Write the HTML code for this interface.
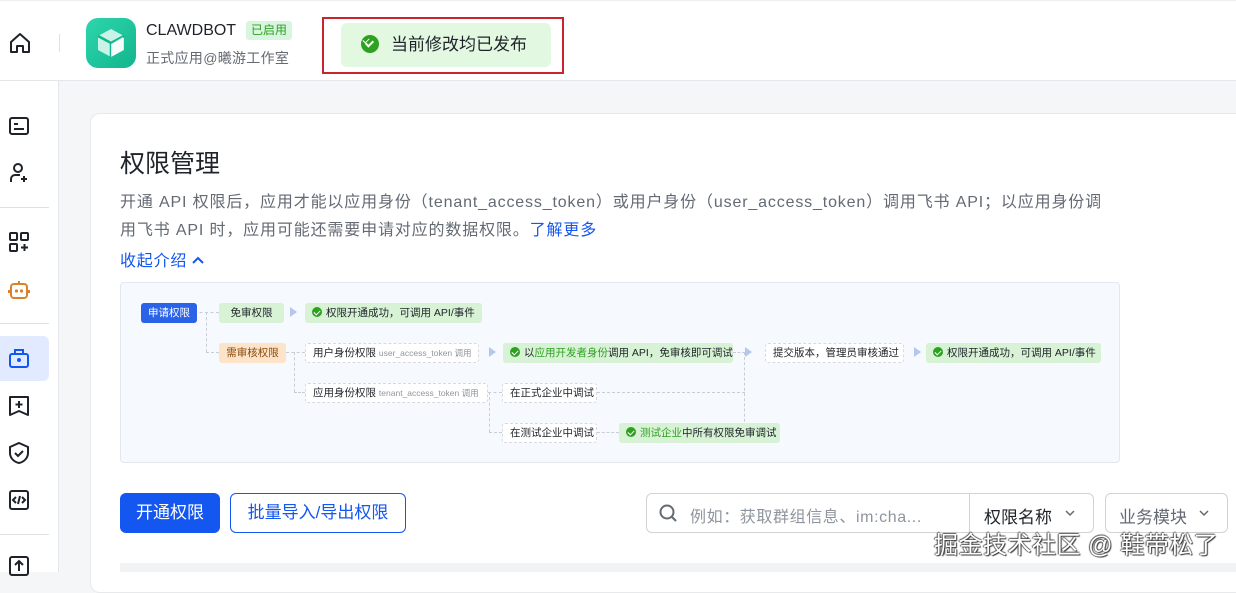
<!DOCTYPE html>
<html><head><meta charset="utf-8"><style>
*{margin:0;padding:0;box-sizing:border-box}
body{width:1236px;height:572px;overflow:hidden;background:#f5f6f7;font-family:"Liberation Sans","Noto Sans CJK SC",sans-serif;position:relative;color:#1f2329}
.a{position:absolute}
.hdr{left:0;top:0;width:1236px;height:81px;background:#fff;border-bottom:1px solid #e4e6ea;border-top:1px solid #eee}
.side{left:0;top:81px;width:59px;height:491px;background:#fff;border-right:1px solid #e4e6ea}
.ic{position:absolute;left:7px;width:24px;height:24px}
.div{position:absolute;left:0;width:49px;height:1px;background:#dee0e3}
.card{left:90px;top:113px;width:1160px;height:480px;background:#fff;border:1px solid #e8e9eb;border-radius:10px}
.dg{left:120px;top:282px;width:1000px;height:181px;background:#f6f9fd;border:1px solid #e3e7ee;border-radius:4px}
.n{position:absolute;height:20px;line-height:20px;font-size:10.5px;border-radius:3px;padding:0 7px;white-space:nowrap;color:#1f2329}
.g{background:#d7f2d5}
.w{background:#fff;border:1px dashed #d5dae2;line-height:18px}
.s{color:#8f959e;font-size:8.5px}
.ck{display:inline-block;width:10px;height:10px;border-radius:50%;background:#2ea121;vertical-align:-1px;margin-right:4px;position:relative}
.ck:after{content:"";position:absolute;left:3px;top:2px;width:3px;height:5px;border:solid #fff;border-width:0 1.3px 1.3px 0;transform:rotate(45deg)}
.ar{position:absolute;width:0;height:0;border-top:5px solid transparent;border-bottom:5px solid transparent;border-left:7px solid #b5c6f2}
.hl{position:absolute;border-top:1px dashed #c9ced6}
.vl{position:absolute;border-left:1px dashed #c9ced6}
.gt{color:#2ea121}
</style></head><body>
<div class="a hdr">
 <svg class="a" style="left:8px;top:30px" width="24" height="24" viewBox="0 0 24 24" fill="none" stroke="#1f2329" stroke-width="2"><path d="M3 11L12 3l9 8v10h-6v-6h-6v6H3z" stroke-linejoin="round"/></svg>
 <div class="a" style="left:59px;top:33px;width:1px;height:18px;background:#dee0e3"></div>
 <div class="a" style="left:86px;top:17px;width:50px;height:50px;border-radius:12px;background:linear-gradient(135deg,#2ed6ad,#12b58c)">
  <svg width="50" height="50" viewBox="0 0 50 50"><path d="M25 11l13 7v14l-13 7-13-7V18z" fill="#c9f3e6"/><path d="M12 18l13 7 13-7" stroke="#12b58c" stroke-width="2.5" fill="none"/><path d="M25 25v14" stroke="#12b58c" stroke-width="2.5"/><path d="M25 26l12-7v13l-12 7z" fill="#fff" opacity=".8"/></svg>
 </div>
 <div class="a" style="left:146px;top:21px;font-size:16px;color:#1f2329">CLAWDBOT</div>
 <div class="a" style="left:246px;top:20px;width:46px;height:19px;background:#d9f5e0;border-radius:3px;color:#2ea121;font-size:12px;line-height:19px;text-align:center">已启用</div>
 <div class="a" style="left:146px;top:47px;font-size:14px;color:#646a73;letter-spacing:0.3px">正式应用@曦游工作室</div>
 <div class="a" style="left:322px;top:16px;width:242px;height:57px;border:2px solid #c9242f"></div>
 <div class="a" style="left:341px;top:22px;width:210px;height:44px;background:#e3f8e1;border-radius:6px;font-size:17px;line-height:44px;padding-left:20px;color:#1f2329"><span class="ck" style="width:18px;height:18px;vertical-align:-3px;margin-right:12px"><i style="position:absolute;left:6px;top:4px;width:5px;height:8px;border:solid #fff;border-width:0 2px 2px 0;transform:rotate(45deg)"></i></span>当前修改均已发布</div>
</div>
<div class="a side">
 <svg class="ic" style="top:33px" viewBox="0 0 24 24" fill="none" stroke="#1f2329" stroke-width="2"><rect x="3" y="4" width="18" height="16" rx="2"/><path d="M7 10h4M7 15h10"/></svg>
 <svg class="ic" style="top:80px" viewBox="0 0 24 24" fill="none" stroke="#1f2329" stroke-width="2"><circle cx="11" cy="7" r="4"/><path d="M4 21v-3a4 4 0 014-4h5M17 15v6M14 18h6"/></svg>
 <div class="div" style="top:126px"></div>
 <svg class="ic" style="top:149px" viewBox="0 0 24 24" fill="none" stroke="#1f2329" stroke-width="2"><rect x="3" y="3" width="7" height="7" rx="1"/><rect x="14" y="3" width="7" height="7" rx="1"/><rect x="3" y="14" width="7" height="7" rx="1"/><path d="M17.5 14v7M14 17.5h7"/></svg>
 <svg class="ic" style="top:197px" viewBox="0 0 24 24" fill="none" stroke="#d9822b" stroke-width="2"><rect x="4" y="6" width="16" height="14" rx="3"/><path d="M12 3v3M2 12v3M22 12v3"/><circle cx="9.5" cy="13" r=".6" fill="#d9822b"/><circle cx="14.5" cy="13" r=".6" fill="#d9822b"/></svg>
 <div class="div" style="top:242px"></div>
 <div class="a" style="left:0;top:255px;width:49px;height:45px;background:#e1eaff;border-radius:0 6px 6px 0"></div>
 <svg class="ic" style="top:265px" viewBox="0 0 24 24" fill="none" stroke="#1456f0" stroke-width="2"><rect x="3" y="8" width="18" height="13" rx="2"/><path d="M8 8V4h8v4"/><circle cx="12" cy="14" r="1" fill="#1456f0"/></svg>
 <svg class="ic" style="top:313px" viewBox="0 0 24 24" fill="none" stroke="#1f2329" stroke-width="2"><path d="M3 3h18v18l-9-4-9 4z" stroke-linejoin="round"/><path d="M12 7v7M8.5 10.5h7"/></svg>
 <svg class="ic" style="top:360px" viewBox="0 0 24 24" fill="none" stroke="#1f2329" stroke-width="2"><path d="M12 2l9 4v6c0 5-4 9-9 10-5-1-9-5-9-10V6z"/><path d="M8 12l3 3 5-5"/></svg>
 <svg class="ic" style="top:407px" viewBox="0 0 24 24" fill="none" stroke="#1f2329" stroke-width="2"><rect x="3" y="3" width="18" height="18" rx="2"/><path d="M9 9l-3 3 3 3M15 9l3 3-3 3M13 8l-2 8"/></svg>
 <div class="div" style="top:453px"></div>
 <svg class="ic" style="top:473px" viewBox="0 0 24 24" fill="none" stroke="#1f2329" stroke-width="2"><rect x="3" y="3" width="18" height="18" rx="2"/><path d="M12 17V8M8 11l4-4 4 4"/></svg>
</div>
<div class="a card"></div>
<div class="a" style="left:120px;top:144px;font-size:25px;color:#1f2329">权限管理</div>
<div class="a" style="left:120px;top:189px;width:996px;font-size:16px;line-height:28px;color:#646a73;letter-spacing:0.85px">开通 API 权限后，应用才能以应用身份（tenant_access_token）或用户身份（user_access_token）调用飞书 API；以应用身份调用飞书 API 时，应用可能还需要申请对应的数据权限。<span style="color:#1456f0">了解更多</span></div>
<div class="a" style="left:120px;top:247px;font-size:16px;color:#1456f0;letter-spacing:0.8px">收起介绍 <svg width="12" height="10" viewBox="0 0 12 10" style="vertical-align:1px"><path d="M1 8l5-5 5 5" fill="none" stroke="#1456f0" stroke-width="2"/></svg></div>
<div class="a dg">
 <div class="hl" style="left:73px;top:29px;width:25px"></div>
 <div class="vl" style="left:85px;top:29px;height:40px"></div>
 <div class="hl" style="left:85px;top:69px;width:13px"></div>
 <div class="hl" style="left:165px;top:69px;width:19px"></div>
 <div class="vl" style="left:173px;top:69px;height:40px"></div>
 <div class="hl" style="left:173px;top:109px;width:11px"></div>
 <div class="hl" style="left:367px;top:109px;width:14px"></div>
 <div class="vl" style="left:368px;top:109px;height:40px"></div>
 <div class="hl" style="left:368px;top:149px;width:13px"></div>
 <div class="hl" style="left:476px;top:109px;width:148px"></div>
 <div class="hl" style="left:476px;top:149px;width:22px"></div>
 <div class="hl" style="left:612px;top:69px;width:12px"></div>
 <div class="vl" style="left:623px;top:69px;height:80px"></div>
 <div class="n" style="left:20px;top:20px;background:#2a62e8;color:#fff">申请权限</div>
 <div class="n g" style="left:98px;top:20px;width:65px;text-align:center">免审权限</div>
 <div class="ar" style="left:169px;top:24px"></div>
 <div class="n g" style="left:184px;top:20px"><span class="ck"></span>权限开通成功，可调用 API/事件</div>
 <div class="n" style="left:98px;top:60px;background:#fde3c8;color:#8a4b0f;width:67px;text-align:center">需审核权限</div>
 <div class="n w" style="left:184px;top:60px;width:174px">用户身份权限 <span class="s">user_access_token 调用</span></div>
 <div class="ar" style="left:368px;top:64px"></div>
 <div class="n g" style="left:382px;top:60px;width:230px"><span class="ck"></span>以<span class="gt">应用开发者身份</span>调用 API，免审核即可调试</div>
 <div class="ar" style="left:624px;top:64px"></div>
 <div class="n w" style="left:644px;top:60px;width:139px">提交版本，管理员审核通过</div>
 <div class="ar" style="left:793px;top:64px"></div>
 <div class="n g" style="left:805px;top:60px;width:175px"><span class="ck"></span>权限开通成功，可调用 API/事件</div>
 <div class="n w" style="left:184px;top:100px;width:183px">应用身份权限 <span class="s">tenant_access_token 调用</span></div>
 <div class="n w" style="left:381px;top:100px;width:95px">在正式企业中调试</div>
 <div class="n w" style="left:381px;top:140px;width:95px">在测试企业中调试</div>
 <div class="n g" style="left:498px;top:140px;width:161px"><span class="ck"></span><span class="gt">测试企业</span>中所有权限免审调试</div>
</div>
<div class="a" style="left:120px;top:493px;width:100px;height:40px;background:#1456f0;border-radius:6px;color:#fff;font-size:17px;line-height:40px;text-align:center">开通权限</div>
<div class="a" style="left:230px;top:493px;width:176px;height:40px;border:1px solid #1456f0;border-radius:6px;color:#1456f0;font-size:17px;line-height:38px;text-align:center">批量导入/导出权限</div>
<div class="a" style="left:646px;top:493px;width:448px;height:40px;border:1px solid #d0d3d6;border-radius:6px;background:#fff"></div>
<svg class="a" style="left:658px;top:503px" width="20" height="20" viewBox="0 0 20 20" fill="none" stroke="#646a73" stroke-width="2"><circle cx="9" cy="9" r="6.5"/><path d="M14 14l4 4"/></svg>
<div class="a" style="left:690px;top:503px;font-size:16px;color:#8f959e;letter-spacing:0.6px">例如：获取群组信息、im:cha...</div>
<div class="a" style="left:969px;top:493px;width:1px;height:40px;background:#d0d3d6"></div>
<div class="a" style="left:984px;top:503px;font-size:17px;color:#1f2329">权限名称</div>
<svg class="a" style="left:1064px;top:508px" width="12" height="10" viewBox="0 0 12 10"><path d="M2 3l4 4 4-4" fill="none" stroke="#646a73" stroke-width="1.5"/></svg>
<div class="a" style="left:1105px;top:493px;width:123px;height:40px;border:1px solid #d0d3d6;border-radius:6px;background:#fff"></div>
<div class="a" style="left:1119px;top:503px;font-size:17px;color:#646a73">业务模块</div>
<svg class="a" style="left:1198px;top:508px" width="12" height="10" viewBox="0 0 12 10"><path d="M2 3l4 4 4-4" fill="none" stroke="#646a73" stroke-width="1.5"/></svg>
<div class="a" style="left:120px;top:563px;width:1116px;height:9px;background:#f2f3f5"></div>
<div class="a" style="left:934px;top:525px;font-size:24px;letter-spacing:0.5px;color:#fff;text-shadow:1px 1px 1px #333,-1px 0 1px #555,0 -1px 1px #555">掘金技术社区 @ 鞋带松了</div>
</body></html>
